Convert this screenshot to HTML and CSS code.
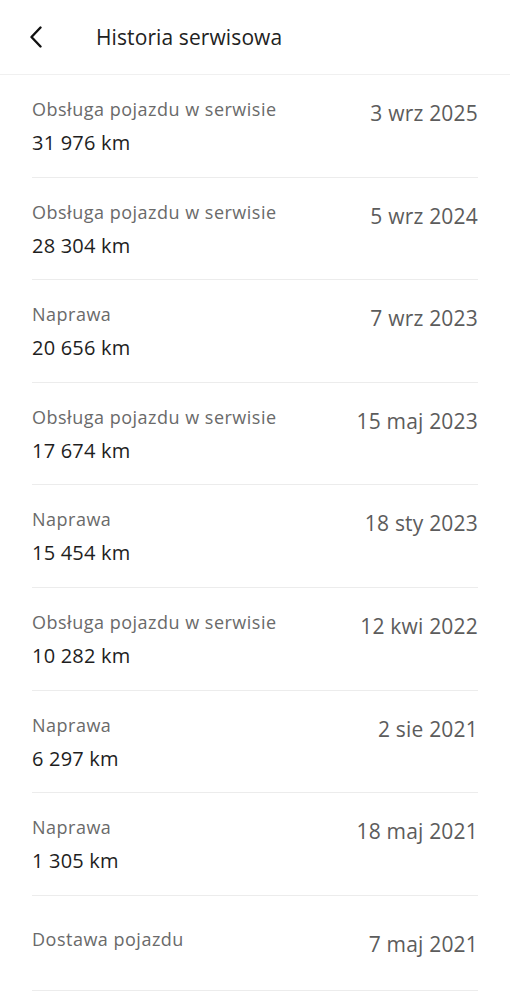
FILE: index.html
```html
<!DOCTYPE html>
<html lang="pl">
<head>
    <meta charset="UTF-8">
    <title>Historia serwisowa</title>
    <link rel="stylesheet" href="styles.css">
</head>
<body>
<div class="header">
    <a class="back" href="javascript:void(0);">
        <svg width="14" height="22" viewBox="0 0 14 22"><path d="M11.5 1.5 L2.5 11 L11.5 20.5" fill="none" stroke="#111" stroke-width="2.4" stroke-linecap="round" stroke-linejoin="round"/></svg>
    </a>
    <div class="header-title">Historia serwisowa</div>
</div>
<ul class="history">
    <li class="history-item">
        <div class="item-info"><div class="item-type">Obsługa pojazdu w serwisie</div><div class="item-km">31 976 km</div></div>
        <div class="item-date">3 wrz 2025</div>
    </li>
    <li class="history-item">
        <div class="item-info"><div class="item-type">Obsługa pojazdu w serwisie</div><div class="item-km">28 304 km</div></div>
        <div class="item-date">5 wrz 2024</div>
    </li>
    <li class="history-item">
        <div class="item-info"><div class="item-type">Naprawa</div><div class="item-km">20 656 km</div></div>
        <div class="item-date">7 wrz 2023</div>
    </li>
    <li class="history-item">
        <div class="item-info"><div class="item-type">Obsługa pojazdu w serwisie</div><div class="item-km">17 674 km</div></div>
        <div class="item-date">15 maj 2023</div>
    </li>
    <li class="history-item">
        <div class="item-info"><div class="item-type">Naprawa</div><div class="item-km">15 454 km</div></div>
        <div class="item-date">18 sty 2023</div>
    </li>
    <li class="history-item">
        <div class="item-info"><div class="item-type">Obsługa pojazdu w serwisie</div><div class="item-km">10 282 km</div></div>
        <div class="item-date">12 kwi 2022</div>
    </li>
    <li class="history-item">
        <div class="item-info"><div class="item-type">Naprawa</div><div class="item-km">6 297 km</div></div>
        <div class="item-date">2 sie 2021</div>
    </li>
    <li class="history-item">
        <div class="item-info"><div class="item-type">Naprawa</div><div class="item-km">1 305 km</div></div>
        <div class="item-date">18 maj 2021</div>
    </li>
    <li class="history-item history-item-last">
        <div class="item-info"><div class="item-type">Dostawa pojazdu</div></div>
        <div class="item-date">7 maj 2021</div>
    </li>
</ul>
</body>
</html>
```

FILE: styles.css
```css
html, body, ul, li, div {
    margin: 0;
    padding: 0;
}
body {
    background: #ffffff;
    font-family: "Open Sans", Lato, "Liberation Sans", sans-serif;
    color: #222222;
}
a {
    text-decoration: none;
    color: #111111;
}
.header {
    height: 74px;
    display: flex;
    align-items: center;
    border-bottom: 1px solid #f0f0f0;
}
.back {
    width: 14px;
    height: 22px;
    margin: 0 0 0 29px;
    display: block;
}
.back svg {
    display: block;
}
.header-title {
    margin-left: 53px;
    font-size: 21px;
    letter-spacing: 0.1px;
    color: #222222;
}
.history {
    list-style: none;
    margin: 0 32px;
}
.history-item {
    display: flex;
    justify-content: space-between;
    align-items: flex-start;
    padding: 22px 0 17.6px 0;
    border-bottom: 1px solid #ececec;
}
.item-type {
    font-size: 18px;
    line-height: 24px;
    letter-spacing: 0.5px;
    color: #6a6a6a;
}
.item-km {
    margin-top: 6px;
    font-size: 20px;
    line-height: 32px;
    letter-spacing: 0.2px;
    color: #1e1e1e;
}
.item-date {
    margin-top: 3px;
    font-size: 21px;
    line-height: 26px;
    letter-spacing: 0.2px;
    color: #5c5c5c;
}
.history-item-last {
    padding: 31px 0 33px 0;
}
.history-item-last .item-date {
    margin-top: 4px;
}
```
